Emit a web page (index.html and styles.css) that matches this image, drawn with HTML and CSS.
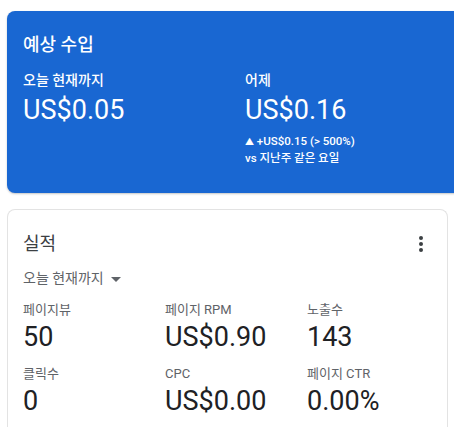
FILE: index.html
```html
<!DOCTYPE html>
<html>
  <head>
    <title>AdSense Home</title>
    <link rel="stylesheet" href="styles.css">
  </head>
  <body>
    <div class="page">
      <div class="card card-blue">
        <h2 class="card-title">예상 수입</h2>
        <div class="earn-row">
          <div class="earn-col">
            <div class="earn-label">오늘 현재까지</div>
            <div class="earn-value">US$0.05</div>
          </div>
          <div class="earn-col">
            <div class="earn-label">어제</div>
            <div class="earn-value">US$0.16</div>
            <div class="earn-diff"><span class="up">▲</span> +US$0.15 (&gt; 500%)</div>
            <div class="earn-diff">vs 지난주 같은 요일</div>
          </div>
        </div>
      </div>

      <div class="card card-white">
        <div class="card-head">
          <h2 class="card-title">실적</h2>
          <svg class="kebab" width="4" height="16" viewBox="0 0 4 16">
            <circle cx="2" cy="2" r="2"></circle>
            <circle cx="2" cy="8" r="2"></circle>
            <circle cx="2" cy="14" r="2"></circle>
          </svg>
        </div>
        <div class="range">오늘 현재까지 <span class="caret"></span></div>
        <div class="stats">
          <div class="stat">
            <div class="stat-label">페이지뷰</div>
            <div class="stat-value">50</div>
          </div>
          <div class="stat">
            <div class="stat-label">페이지 RPM</div>
            <div class="stat-value">US$0.90</div>
          </div>
          <div class="stat">
            <div class="stat-label">노출수</div>
            <div class="stat-value">143</div>
          </div>
          <div class="stat">
            <div class="stat-label">클릭수</div>
            <div class="stat-value">0</div>
          </div>
          <div class="stat">
            <div class="stat-label">CPC</div>
            <div class="stat-value">US$0.00</div>
          </div>
          <div class="stat">
            <div class="stat-label">페이지 CTR</div>
            <div class="stat-value">0.00%</div>
          </div>
        </div>
      </div>
    </div>
  </body>
</html>
```
FILE: styles.css
```css
* {
  box-sizing: border-box;
}

body {
  margin: 0;
  font-family: Roboto, "Noto Sans CJK KR", sans-serif;
  background-color: #fff;
  overflow: hidden;
}

.page {
  padding: 11px 0 0 7px;
  display: flex;
  flex-direction: column;
  gap: 16px;
}

.card {
  border-radius: 8px;
}

.card-blue {
  width: 480px;
  height: 182px;
  padding: 22px 16px 0 16px;
  background-color: #1967d2;
  color: #fff;
  box-shadow: 0 1px 2px rgba(60, 64, 67, 0.3);
}

.card-title {
  margin: 0;
  font-size: 18px;
  font-weight: 500;
  line-height: 24px;
}

.earn-row {
  display: flex;
  margin-top: 13px;
}

.earn-col {
  width: 222px;
}

.earn-label {
  font-size: 14px;
  font-weight: 500;
  line-height: 20px;
}

.earn-value {
  font-size: 27px;
  line-height: 40px;
  margin-bottom: 3px;
}

.earn-diff {
  font-size: 11.5px;
  font-weight: 500;
  line-height: 16px;
}

.up {
  font-size: 9px;
}

.card-white {
  width: 441px;
  height: 240px;
  padding: 22px 16px 0 15px;
  border: 1px solid #e3e3e3;
  border-bottom: none;
  color: #3c4043;
}

.card-white .card-title {
  font-weight: 400;
}

.card-head {
  display: flex;
  justify-content: space-between;
  align-items: center;
  padding-right: 8px;
}

.kebab {
  fill: #3c4043;
}

.range {
  margin-top: 12px;
  font-size: 14px;
  line-height: 20px;
  color: #5f6368;
}

.caret {
  display: inline-block;
  margin-left: 4px;
  vertical-align: middle;
  border-left: 5px solid transparent;
  border-right: 5px solid transparent;
  border-top: 5px solid #5f6368;
}

.stats {
  display: grid;
  grid-template-columns: 142px 142px 142px;
  row-gap: 10px;
  margin-top: 12px;
}

.stat-label {
  font-size: 13px;
  line-height: 20px;
  color: #5f6368;
}

.stat-value {
  font-size: 27px;
  line-height: 34px;
  color: #202124;
}
```
